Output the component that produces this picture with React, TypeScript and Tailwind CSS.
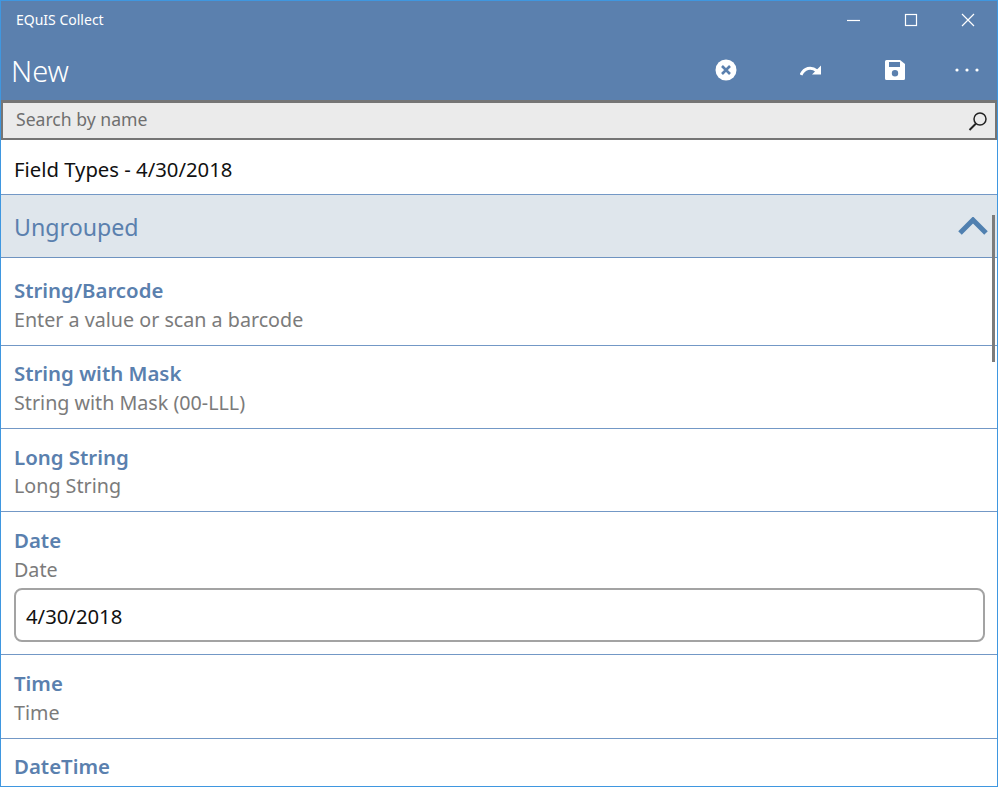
const fields = [
  { name: "String/Barcode", desc: "Enter a value or scan a barcode", height: "h-[88px]", pt: "pt-[18px]", gap: "mt-[1px]" },
  { name: "String with Mask", desc: "String with Mask (00-LLL)", height: "h-[83px]", pt: "pt-[13px]", gap: "mt-[1px]" },
  { name: "Long String", desc: "Long String", height: "h-[83px]", pt: "pt-[14px]", gap: "" },
];

function FieldRow({ name, desc, height, pt, gap }: { name: string; desc: string; height: string; pt: string; gap: string }) {
  return (
    <div className={`${height} ${pt} px-[13px] border-b border-[#7398c6]`}>
      <div className="text-[20.4px] leading-[28px] font-semibold text-[#5a80ae]">{name}</div>
      <div className={`${gap} text-[19.7px] leading-[29px] text-[#7b7b7b]`}>{desc}</div>
    </div>
  );
}

export default function App() {
  return (
    <div className="relative h-[787px] w-[998px] overflow-hidden bg-white border border-[#3f97e0] font-['Noto_Sans','Open_Sans',sans-serif]">
      {/* Title bar */}
      <div className="h-[99px] bg-[#5b80ae] text-white">
        <div className="flex h-[38px] items-center justify-between">
          <span className="pl-[15px] pb-[2px] text-[14px]">EQuIS Collect</span>
          <div className="flex items-center">
            <svg width="57" height="16" viewBox="0 0 57 16" fill="none" stroke="#fff">
              <path d="M21 8.500h13" strokeWidth="1.200" />
            </svg>
            <svg width="57" height="16" viewBox="0 0 57 16" fill="none" stroke="#fff">
              <rect x="22.500" y="2.500" width="11" height="11" strokeWidth="1.200" />
            </svg>
            <svg width="57" height="16" viewBox="0 0 57 16" fill="none" stroke="#fff">
              <path d="M22 2l12 12M34 2L22 14" strokeWidth="1.200" />
            </svg>
          </div>
        </div>
        <div className="flex h-[61px] items-center justify-between">
          <h1 className="pl-[10px] pt-[2px] text-[29px] font-light">New</h1>
          <div className="flex items-center pr-[18px]">
            <svg className="mr-[63px]" width="22" height="22" viewBox="0 0 22 22">
              <circle cx="11" cy="11" r="10.500" fill="#fff" />
              <path d="M7 7l8 8M15 7l-8 8" stroke="#5b80ae" strokeWidth="2.600" />
            </svg>
            <svg className="mr-[63px]" width="22" height="14" viewBox="0 0 22 14">
              <path d="M1 12C4 5 11 3 17 8" fill="none" stroke="#fff" strokeWidth="3" />
              <path d="M21 2.500v9h-9z" fill="#fff" />
            </svg>
            <svg className="mr-[50px]" width="20" height="20" viewBox="0 0 20 20">
              <path
                fillRule="evenodd"
                fill="#fff"
                d="M1.500 0H15l5 4v14.500a1.500 1.500 0 0 1-1.500 1.500h-17A1.500 1.500 0 0 1 0 18.500v-17A1.500 1.500 0 0 1 1.500 0zM4 2v5h11V2zM10 10a3.200 3.200 0 1 0 0 6.400 3.200 3.200 0 0 0 0-6.400z"
              />
            </svg>
            <svg width="24" height="4" viewBox="0 0 24 4" fill="#fff">
              <circle cx="2" cy="2" r="1.600" />
              <circle cx="12" cy="2" r="1.600" />
              <circle cx="22" cy="2" r="1.600" />
            </svg>
          </div>
        </div>
      </div>

      {/* Search */}
      <div className="flex h-[40px] items-center justify-between border-2 border-[#757575] border-t-[3px] bg-[#ebebeb] pl-[13px] pr-[7px]">
        <span className="text-[17.600px] leading-[24px] pb-[4px] text-[#6f6f6f]">Search by name</span>
        <svg width="20" height="20" viewBox="0 0 20 20" fill="none" stroke="#222">
          <circle cx="12" cy="8" r="6" strokeWidth="1.500" />
          <path d="M8 12.500L1.500 19" strokeWidth="2" />
        </svg>
      </div>

      {/* Form */}
      <div className="flex h-[55px] items-center border-b border-[#7398c6] px-[13px] text-[20.300px] text-[#111] pt-[4px]">
        Field Types - 4/30/2018
      </div>
      <div className="flex h-[63px] items-center justify-between border-b border-[#6e93c0] bg-[#dfe6ec] pl-[13px] pr-[9px]">
        <span className="pt-[2px] text-[23.200px] text-[#5a80ae]">Ungrouped</span>
        <svg width="30" height="18" viewBox="0 0 30 18" fill="none">
          <path d="M2 16L15 3l13 13" stroke="#5080b0" strokeWidth="5" />
        </svg>
      </div>

      {fields.map((f) => (
        <FieldRow key={f.name} {...f} />
      ))}

      <div className="h-[143px] border-b border-[#7398c6] px-[13px] pt-[14px]">
        <div className="text-[20.400px] leading-[28px] font-semibold text-[#5a80ae]">Date</div>
        <div className="mt-[1px] text-[19.700px] leading-[29px] text-[#7b7b7b]">Date</div>
        <div className="mt-[4px] flex h-[54px] w-[971px] items-center rounded-[8px] border-2 border-[#a3a3a3] px-[10px] pt-[2px] text-[20.300px] text-[#111]">
          4/30/2018
        </div>
      </div>

      <FieldRow name="Time" desc="Time" height="h-[84px]" pt="pt-[14px]" gap="mt-[1px]" />

      <div className="px-[13px] pt-[13px] text-[20.400px] leading-[28px] font-semibold text-[#5a80ae]">DateTime</div>

      {/* Scrollbar overlay */}
      <div className="absolute left-[991px] top-[214px] h-[147px] w-[3px] bg-[#7c7c7c]" />
    </div>
  );
}
